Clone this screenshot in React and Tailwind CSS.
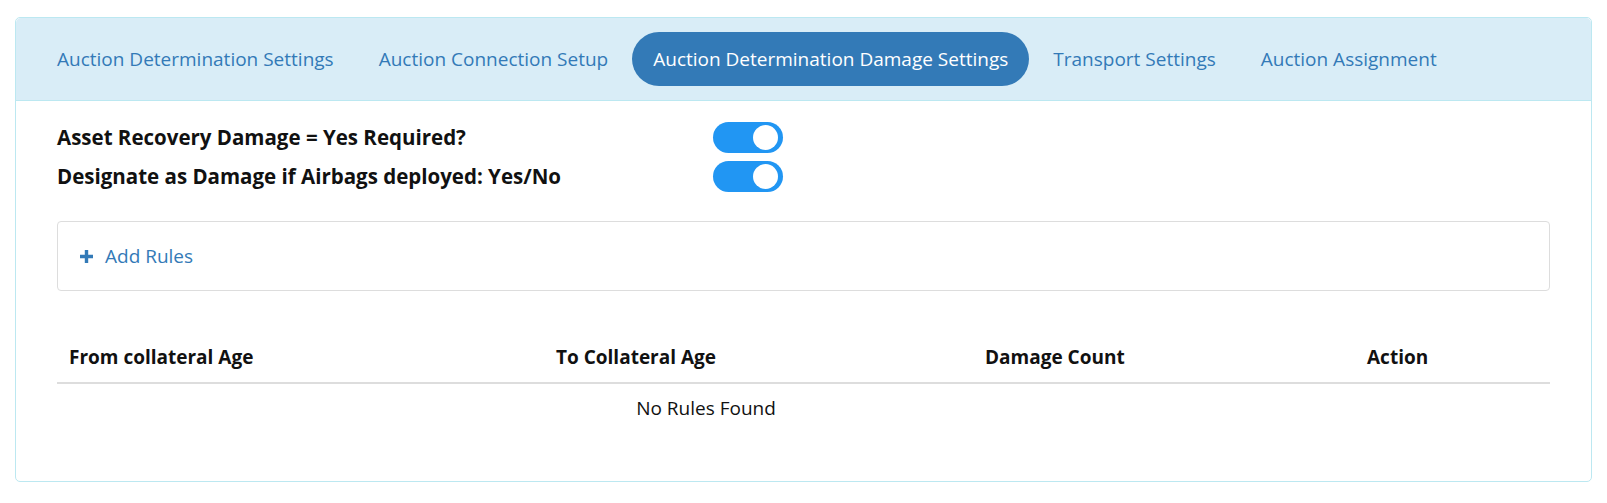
import React, { useState } from 'react';

const tabs = [
  'Auction Determination Settings',
  'Auction Connection Setup',
  'Auction Determination Damage Settings',
  'Transport Settings',
  'Auction Assignment',
];

const Toggle = ({ on, onChange }) => (
  <button
    type="button"
    onClick={() => onChange(!on)}
    className={`relative block h-[31px] w-[70px] rounded-full transition-colors ${on ? 'bg-[#2196f3]' : 'bg-[#ccc]'}`}
  >
    <span
      className={`absolute top-[3px] h-[25px] w-[25px] rounded-full bg-white transition-all ${on ? 'left-[40px]' : 'left-[4px]'}`}
    />
  </button>
);

const App = () => {
  const [active, setActive] = useState(2);
  const [recovery, setRecovery] = useState(true);
  const [airbags, setAirbags] = useState(true);

  return (
    <div className="p-[15px] pt-[17px] font-['Open_Sans',sans-serif] text-[19px] text-[#111]">
      <div className="rounded-[5px] border border-[#bce8f1] bg-white">
        {/* Tabs */}
        <div className="flex items-center gap-[3px] rounded-t-[5px] border-b border-[#bce8f1] bg-[#d9edf7] px-[20px] py-[14px]">
          {tabs.map((t, i) => (
            <button
              key={t}
              type="button"
              onClick={() => setActive(i)}
              className={`h-[54px] rounded-full px-[21px] text-[19px] ${i === active ? 'bg-[#337ab7] text-white' : 'text-[#337ab7]'}`}
            >
              {t}
            </button>
          ))}
        </div>

        <div className="px-[41px] pt-[21px] pb-[49px]">
          {/* Switches */}
          <div className="grid grid-cols-[656px_auto] items-center gap-y-[8px]">
            <div className="text-[20.5px] font-bold leading-[31px]">Asset Recovery Damage = Yes Required?</div>
            <div className="flex"><Toggle on={recovery} onChange={setRecovery} /></div>
            <div className="text-[20.5px] font-bold leading-[31px]">Designate as Damage if Airbags deployed: Yes/No</div>
            <div className="flex"><Toggle on={airbags} onChange={setAirbags} /></div>
          </div>

          {/* Add rules */}
          <div className="mt-[29px] flex h-[70px] items-center rounded-[4px] border border-[#ddd] px-[21px]">
            <button type="button" className="flex items-center gap-[11px] leading-[28px] text-[#337ab7]">
              <svg width="15" height="15" viewBox="0 0 15 15">
                <path d="M7.5 1v13M1 7.5h13" stroke="#337ab7" strokeWidth="3.4" />
              </svg>
              Add Rules
            </button>
          </div>

          {/* Rules table */}
          <table className="mt-[40px] w-full table-fixed border-collapse">
            <colgroup>
              <col className="w-[487px]" />
              <col className="w-[429px]" />
              <col className="w-[382px]" />
              <col />
            </colgroup>
            <thead>
              <tr className="border-b-2 border-[#ddd]">
                <th className="px-[12px] pt-[12px] pb-[11px] text-left font-bold leading-[28px]">From collateral Age</th>
                <th className="px-[12px] pt-[12px] pb-[11px] text-left font-bold leading-[28px]">To Collateral Age</th>
                <th className="px-[12px] pt-[12px] pb-[11px] text-left font-bold leading-[28px]">Damage Count</th>
                <th className="px-[12px] pt-[12px] pb-[11px] text-left font-bold leading-[28px]">Action</th>
              </tr>
            </thead>
            <tbody>
              <tr>
                <td colSpan={3} className="py-[10px] text-center leading-[28px]">No Rules Found</td>
                <td />
              </tr>
            </tbody>
          </table>
        </div>
      </div>
    </div>
  );
};

export default App;
